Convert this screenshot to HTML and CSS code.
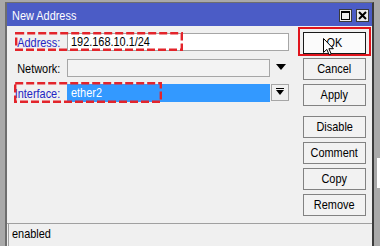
FILE: index.html
```html
<!DOCTYPE html>
<html>
<head>
<meta charset="utf-8">
<link rel="stylesheet" href="styles.css">
</head>
<body>
<div class="desk">
  <div class="window">
    <div class="titlebar">
      <span class="title"><span class="t tl">New Address</span></span>
      <div class="tbtns">
        <span class="tb"><span class="maxicon"></span></span>
        <span class="tb">
          <svg width="9" height="9" viewBox="0 0 9 9"><path d="M1 1 L8 8 M8 1 L1 8" stroke="#000" stroke-width="2"/></svg>
        </span>
      </div>
    </div>
    <div class="main">
      <div class="form">
        <div class="row r1">
          <span class="lbl blue"><span class="t tr">Address:</span></span>
          <div class="field white waddr"><span class="t tl">192.168.10.1/24</span></div>
        </div>
        <div class="row r2">
          <span class="lbl"><span class="t tr">Network:</span></span>
          <div class="field wnet"></div>
          <span class="arrow"><svg width="10" height="6" viewBox="0 0 10 6"><path d="M0 0 H10 L5 6 Z" fill="#000"/></svg></span>
        </div>
        <div class="row r3">
          <span class="lbl blue"><span class="t tr">Interface:</span></span>
          <div class="field sel"><span class="t tl">ether2</span></div>
          <span class="ddbtn"><svg width="8" height="8" viewBox="0 0 8 8"><path d="M0 0.5 H8" stroke="#000" stroke-width="1"/><path d="M0 2 H8 L4 7 Z" fill="#000"/></svg></span>
        </div>
        <svg class="anno a1" width="168" height="19" viewBox="0 0 168 19"><rect x="1.2" y="1.2" width="165.6" height="16.6" fill="none" stroke="#e3242b" stroke-width="2.4" stroke-dasharray="8 3"/></svg>
        <svg class="anno a2" width="148" height="21" viewBox="0 0 148 21"><rect x="1.2" y="1.2" width="145.6" height="18.6" fill="none" stroke="#e3242b" stroke-width="2.4" stroke-dasharray="8 3"/></svg>
      </div>
      <div class="buttons">
        <div class="btn ok"><span class="t">OK</span></div>
        <div class="btn"><span class="t">Cancel</span></div>
        <div class="btn"><span class="t">Apply</span></div>
        <div class="btn sep"><span class="t">Disable</span></div>
        <div class="btn"><span class="t">Comment</span></div>
        <div class="btn"><span class="t">Copy</span></div>
        <div class="btn"><span class="t">Remove</span></div>
        <div class="okframe"></div>
        <svg class="cursor" width="12" height="18" viewBox="0 0 12 18"><path d="M0.5 0.5 L0.5 14.5 L3.8 11.4 L6.2 16.8 L8.2 15.9 L5.9 10.7 L10.4 10.7 Z" fill="#fff" stroke="#000" stroke-width="1"/></svg>
      </div>
    </div>
    <div class="status">
      <div class="statusbox"><span class="t tl">enabled</span></div>
    </div>
  </div>
  <div class="outside">
    <div class="patch"></div>
  </div>
</div>
</body>
</html>
```
FILE: styles.css
```css
html, body {
  margin: 0;
  padding: 0;
}
body {
  width: 380px;
  height: 246px;
  overflow: hidden;
  background: #a9a9a9;
  font-family: "Liberation Sans", Arial, sans-serif;
  font-size: 13px;
  color: #000;
}
.t {
  display: inline-block;
  white-space: nowrap;
  transform: scaleX(0.84);
  transform-origin: center center;
}
.t.tl { transform-origin: left center; }
.t.tr { transform-origin: right center; }
.desk {
  display: flex;
  padding-top: 2px;
  padding-left: 5px;
  height: 244px;
}
.window {
  width: 365px;
  border-left: 2px solid #6e6e6e;
  border-right: 2px solid #3c3c3c;
  border-top: 1px solid #6e6e6e;
  background: #f0f0f0;
  display: flex;
  flex-direction: column;
}
.titlebar {
  height: 23px;
  background: #4b5cc6;
  display: flex;
  align-items: center;
  justify-content: space-between;
  padding-left: 5px;
  padding-right: 3px;
}
.title {
  color: #fff;
  font-size: 13px;
  margin-top: 1px;
}
.tbtns {
  display: flex;
  gap: 4px;
  margin-top: 2px;
}
.tb {
  width: 11px;
  height: 11px;
  border: 1px solid #3a3a3a;
  background: #ececec;
  display: flex;
  align-items: center;
  justify-content: center;
}
.maxicon {
  width: 7px;
  height: 6px;
  border: 1px solid #000;
  border-top-width: 2px;
}
.main {
  height: 197px;
  display: flex;
}
.form {
  flex: 1;
  position: relative;
}
.row {
  display: flex;
  align-items: center;
  height: 18px;
}
.r1 { margin-top: 7px; }
.r2 { margin-top: 8px; }
.r3 { margin-top: 7px; }
.lbl {
  width: 53px;
  flex: none;
  text-align: right;
  margin-right: 7px;
  white-space: nowrap;
  display: flex;
  justify-content: flex-end;
}
.blue { color: #2424c4; }
.field {
  height: 16px;
  border: 1px solid #a6a6a6;
  background: #f3f3f3;
  line-height: 16px;
  padding-left: 3px;
  box-sizing: content-box;
  white-space: nowrap;
}
.white { background: #fff; }
.waddr { width: 217px; }
.wnet { width: 198px; }
.arrow {
  margin-left: 6px;
  display: flex;
  align-items: center;
  margin-top: -2px;
}
.sel {
  width: 198px;
  height: 16px;
  background: #3399ff;
  border-color: #3399ff;
  color: #fff;
}
.ddbtn {
  width: 16px;
  height: 15px;
  border: 1px solid #a6a6a6;
  background: #f0f0f0;
  display: flex;
  align-items: center;
  justify-content: center;
  margin-left: 1px;
  margin-top: -2px;
}
.anno {
  position: absolute;
}
.a1 { left: 8px; top: 6px; }
.a2 { left: 7px; top: 56px; }
.buttons {
  width: 63px;
  margin-right: 6px;
  padding-top: 6px;
  display: flex;
  flex-direction: column;
  gap: 4px;
  position: relative;
}
.btn {
  height: 20px;
  border: 1px solid #828282;
  background: #f2f2f2;
  text-align: center;
  line-height: 20px;
}
.btn.sep { margin-top: 6px; }
.btn.ok {
  border-color: #1a1a1a;
  background: #fbfbfb;
}
.okframe {
  position: absolute;
  left: -5px;
  top: 1px;
  width: 69px;
  height: 25px;
  border: 2px solid #e0141c;
}
.cursor {
  position: absolute;
  left: 20px;
  top: 12px;
}
.status {
  flex: 1;
  border-top: 1px solid #a0a0a0;
  display: flex;
}
.statusbox {
  flex: 1;
  margin-left: 1px;
  border-left: 1px solid #a0a0a0;
  padding-left: 3px;
  line-height: 19px;
}
.outside {
  flex: 1;
  display: flex;
  justify-content: flex-end;
}
.patch {
  width: 3px;
  height: 30px;
  margin-top: 156px;
  background: #fff;
}
```
